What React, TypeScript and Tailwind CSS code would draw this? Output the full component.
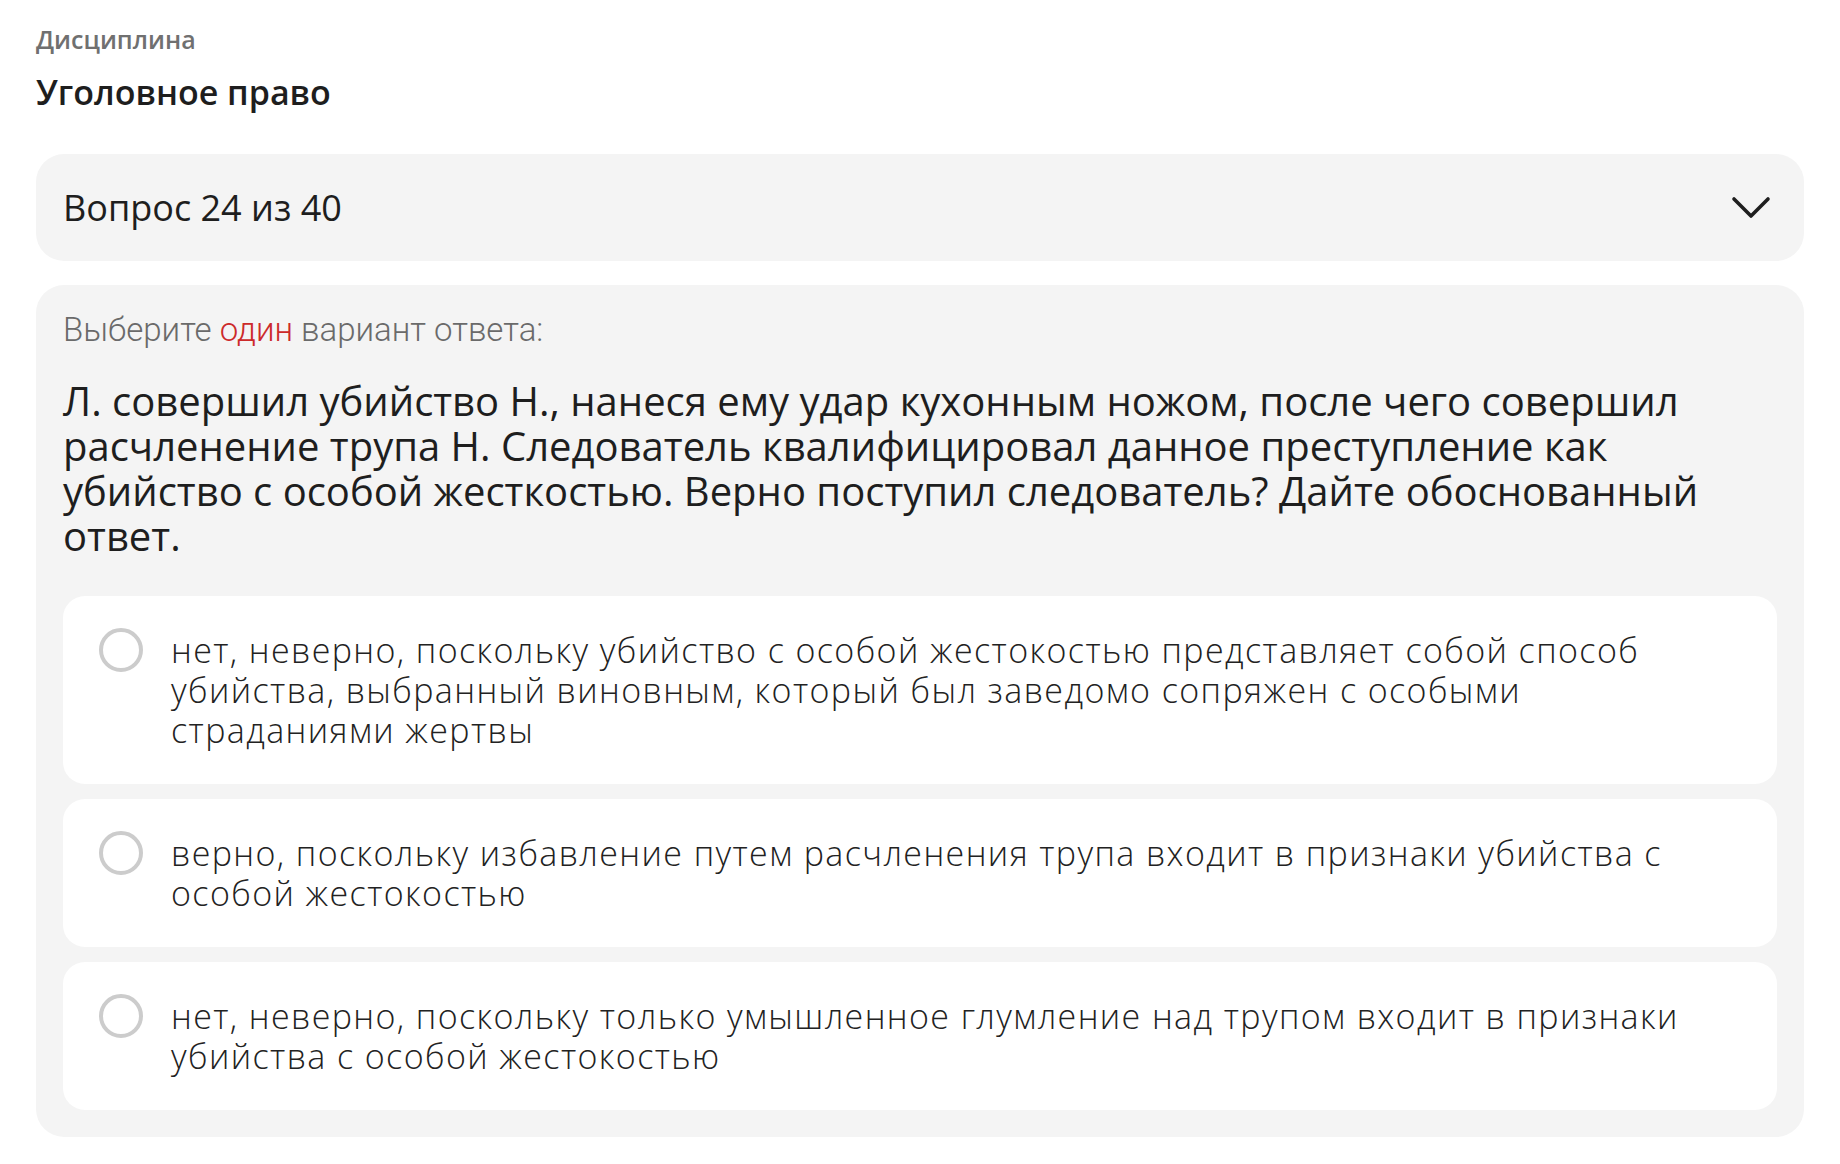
import React, { useState } from "react";

const answers = [
  "нет, неверно, поскольку убийство с особой жестокостью представляет собой способ убийства, выбранный виновным, который был заведомо сопряжен с особыми страданиями жертвы",
  "верно, поскольку избавление путем расчленения трупа входит в признаки убийства с особой жестокостью",
  "нет, неверно, поскольку только умышленное глумление над трупом входит в признаки убийства с особой жестокостью",
];

const Chevron: React.FC = () => (
  <svg width="40" height="24" viewBox="0 0 40 24" fill="none">
    <polyline
      points="3,3 20,20 37,3"
      stroke="#1e1e1e"
      strokeWidth="3.6"
      strokeLinecap="round"
      strokeLinejoin="round"
    />
  </svg>
);

const App: React.FC = () => {
  const [selected, setSelected] = useState<number | null>(null);

  return (
    <div className="min-h-screen bg-white px-[36px] pt-[23px] font-['Open_Sans',sans-serif] text-[#1e1e1e]">
      <div className="text-[25px] font-semibold leading-[32px] text-[#707070]">Дисциплина</div>
      <div className="mt-[16px] text-[34px] font-semibold leading-[42px]">Уголовное право</div>

      <div className="mt-[41px] flex h-[107px] items-center justify-between rounded-[28px] bg-[#f4f4f4] pl-[27px] pr-[33px]">
        <span className="text-[36px] leading-[44px]">Вопрос 24 из 40</span>
        <Chevron />
      </div>

      <div className="mt-[24px] rounded-[28px] bg-[#f4f4f4] px-[27px] pt-[26px] pb-[27px]">
        <div className="font-['Roboto',sans-serif] text-[33px] font-light leading-[38px] text-[#6a6a6a]">
          Выберите <span className="text-[#cc2a2a]">один</span> вариант ответа:
        </div>
        <div className="mt-[29px] text-[40px] font-medium leading-[45px] text-[#1e1e1e]">
          Л. совершил убийство Н., нанеся ему удар кухонным ножом, после чего совершил расчленение
          трупа Н. Следователь квалифицировал данное преступление как убийство с особой жесткостью.
          Верно поступил следователь? Дайте обоснованный ответ.
        </div>

        <div className="mt-[38px] flex flex-col gap-[15px]">
          {answers.map((text, i) => (
            <button
              key={i}
              onClick={() => setSelected(i)}
              className="flex items-start gap-[28px] rounded-[22px] bg-white py-[34px] pl-[36px] pr-[40px] text-left"
            >
              <span
                className={`mt-[-2px] h-[44px] w-[44px] shrink-0 rounded-full border-[4px] ${
                  selected === i ? "border-[#cc2a2a]" : "border-[#cccccc]"
                }`}
              />
              <span className="text-[34px] font-light leading-[40px] tracking-[1.4px] text-[#222222]">
                {text}
              </span>
            </button>
          ))}
        </div>
      </div>
    </div>
  );
};

export default App;
